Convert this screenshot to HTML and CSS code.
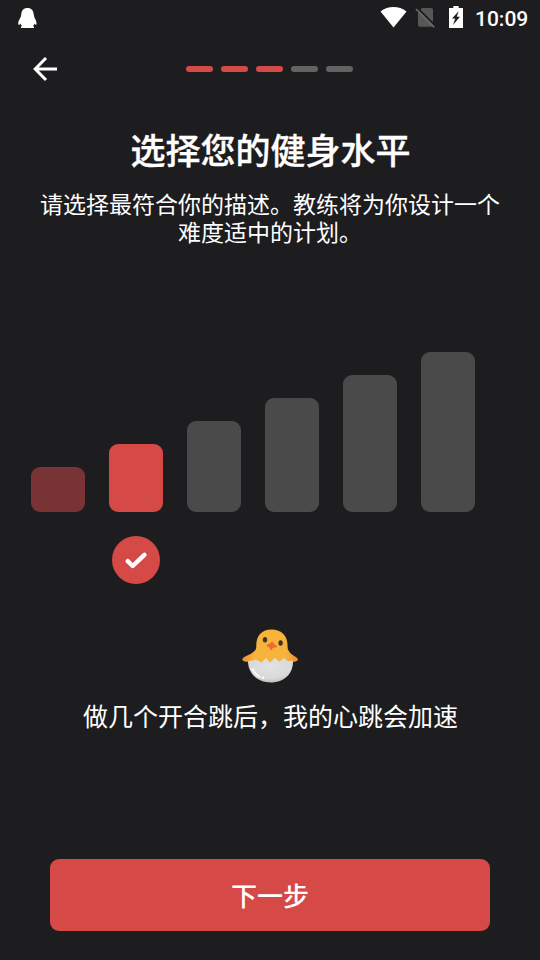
FILE: index.html
```html
<!DOCTYPE html>
<html lang="zh-CN">
<head>
<meta charset="utf-8">
<title>选择您的健身水平</title>
<link rel="stylesheet" href="styles.css">
</head>
<body>
<main class="screen">
  <header class="status">
    <svg class="penguin" width="20" height="22" viewBox="0 0 20 22"><path fill="#fff" d="M9.5 0C5.7 0 3.3 2.6 3.2 6.8C3.1 8.6 2.3 10 1.1 12C.1 14 0 16 .6 16.8C1.3 17.3 2.1 16 2.5 15.4C2.8 16.5 3.3 17.2 4 18C2.8 18.5 2.6 19.1 3.2 20L15.8 20C16.5 19.1 16 18.5 15 18C15.8 17.2 16.2 16.5 16.5 15.4C17 16 17.9 17.3 18.4 16.6C18.8 15.6 18.5 14 17.7 12C16.6 10 16 8.6 15.8 6.8C15.6 2.6 13.3 0 9.5 0Z"/></svg>
    <div class="indicators">
      <svg class="wifi" width="27" height="21" viewBox="0 0 27 21"><path fill="#fff" d="M13.5 20.5L.5 4.4C4.3 1.4 8.7 0 13.5 0S22.7 1.4 26.5 4.4Z"/></svg>
      <svg class="nosim" width="21" height="22" viewBox="0 0 21 22"><path fill="#575757" d="M7 1H16.2Q18 1 18 2.8V17.8Q18 19.8 16.2 19.8H4.8Q3 19.8 3 18V5.2Z"/><path stroke="#1d1d1f" stroke-width="2" d="M2 .8L20.5 18.8"/><path stroke="#696969" stroke-width="1.7" d="M1 2L19.3 20.3"/></svg>
      <svg class="battery" width="14" height="22" viewBox="0 0 14 22"><path fill="#fff" d="M4.3 0H9.7V2H14V22H0V2H4.3Z"/><path fill="#1d1d1f" d="M9.6 5.2L3 12.4H6.2L4 19L11 10.8H7.8Z"/></svg>
      <span class="clock">10:09</span>
    </div>
  </header>

  <nav class="nav">
    <svg class="back" width="26" height="26" viewBox="0 0 26 26" fill="none" stroke="#fff" stroke-width="3"><path d="M13 2L2.2 13L13 24M2.5 13H24"/></svg>
    <div class="steps"><i class="step done"></i><i class="step done"></i><i class="step done"></i><i class="step"></i><i class="step"></i></div>
  </nav>

  <h1 class="title">选择您的健身水平</h1>
  <p class="intro">请选择最符合你的描述。教练将为你设计一个<br>难度适中的计划。</p>

  <section class="levels">
    <div class="level"><div class="bar passed h1"></div></div>
    <div class="level"><div class="bar active h2"></div></div>
    <div class="level"><div class="bar h3"></div></div>
    <div class="level"><div class="bar h4"></div></div>
    <div class="level"><div class="bar h5"></div></div>
    <div class="level"><div class="bar h6"></div></div>
  </section>
  <div class="check"><svg width="48" height="48" viewBox="0 0 48 48"><path d="M15.7 25.2L20.7 30L32.4 18.8" fill="none" stroke="#fff" stroke-width="4.4" stroke-linecap="round" stroke-linejoin="round"/></svg></div>

  <svg class="chick" width="80" height="70" viewBox="0 0 80 70">
    <defs>
      <linearGradient id="wing" x1="0" y1="0" x2="1" y2="0"><stop offset="0" stop-color="#ee8f2c"/><stop offset=".22" stop-color="#f7b43c"/><stop offset=".78" stop-color="#f7b43c"/><stop offset="1" stop-color="#ee8f2c"/></linearGradient>
      <radialGradient id="shell" cx=".5" cy=".35" r=".65"><stop offset="0" stop-color="#e2e2e2"/><stop offset=".75" stop-color="#d9d9da"/><stop offset="1" stop-color="#bebec0"/></radialGradient>
    </defs>
    <path fill="url(#wing)" d="M26.3 27C25.7 16 31.5 9.4 41.5 9.4C52 9.4 58 16 57.6 27C57.6 31 61 34 64.5 36.2C67.2 37.7 68.6 39 67.5 40.3C66.2 42 62.5 42 59 41.5L54 46H28L23 41.2C18.5 42 14.2 42 12.7 40.2C11.5 38.8 13.3 37.5 15.6 36.3C20.7 33.7 26.2 31.5 26.3 27Z"/>
    <path fill="url(#shell)" d="M18 41L22 40.7L26 39.5L31.5 42.4L35.8 38L40 42.4L45 37.7L49.3 41.8L54 38L58 41.3L63 40.6C63.4 54 54 62.4 40.8 62.4C27.5 62.4 18 53.5 18 41Z"/>
    <path d="M22.5 49Q25 54.5 29.5 56.7" fill="none" stroke="#f6f6f6" stroke-width="2.2" stroke-linecap="round"/>
    <circle cx="33" cy="57.7" r="1.2" fill="#fff"/>
    <ellipse cx="35" cy="19.8" rx="2.2" ry="2.7" fill="#42351f"/><ellipse cx="50.6" cy="23" rx="2.2" ry="2.7" fill="#42351f"/>
    <path fill="#ec6c2f" stroke="#ec6c2f" stroke-width="1.8" stroke-linejoin="round" d="M42 22.5L43.6 24.6L46 26.5L42.8 26.8L41 29.3L39.8 26.8L37.5 25.4L40.8 24.3Z"/>
  </svg>
  <p class="caption">做几个开合跳后，我的心跳会加速</p>
  <button class="next">下一步</button>
</main>
</body>
</html>
```

FILE: styles.css
```css
* { box-sizing: border-box; }
body {
  margin: 0;
  background: #1d1d1f;
  color: #fff;
  font-family: Roboto, "Noto Sans CJK SC", sans-serif;
}
.screen {
  width: 540px;
  height: 960px;
  display: flex;
  flex-direction: column;
  align-items: center;
  overflow: hidden;
}
.status {
  width: 100%;
  height: 36px;
  display: flex;
  justify-content: space-between;
  padding: 0 12px 0 18px;
}
.penguin { margin-top: 8px; }
.indicators { display: flex; }
.wifi { margin: 7px 8px 0 0; }
.nosim { margin: 7px 13px 0 0; }
.battery { margin: 6px 12px 0 0; }
.clock {
  font-size: 21px;
  font-weight: 500;
  line-height: 38px;
  width: 53px;
  white-space: nowrap;
}
.nav {
  width: 100%;
  height: 66px;
  display: grid;
  grid-template-columns: 1fr auto 1fr;
  align-items: center;
}
.back { margin-left: 33px; }
.steps { display: flex; gap: 8px; margin-right: 1px; }
.step { width: 27px; height: 6px; border-radius: 3px; background: #636363; }
.step.done { background: #d54947; }
.title {
  margin: 24px 0 0 1px;
  font-size: 35px;
  line-height: 54px;
  font-weight: 500;
  -webkit-text-stroke: 0.35px #fff;
}
.intro {
  margin: 12px 0 0;
  font-size: 23px;
  line-height: 28px;
  text-align: center;
  white-space: nowrap;
}
.levels {
  width: 100%;
  height: 160px;
  margin-top: 104px;
  padding-left: 31px;
  display: flex;
  align-items: flex-end;
  gap: 24px;
}
.bar { width: 54px; border-radius: 9px; background: #4a4a4b; }
.bar.passed { background: #793334; }
.bar.active { background: #d54947; }
.h1 { height: 45px; }
.h2 { height: 68px; }
.h3 { height: 91px; }
.h4 { height: 114px; }
.h5 { height: 137px; }
.h6 { height: 160px; }
.check {
  align-self: flex-start;
  width: 48px;
  height: 48px;
  margin: 24px 0 0 112px;
  border-radius: 50%;
  background: #d54947;
}
.check svg { display: block; }
.chick { margin-top: 36px; flex: none; }
.caption {
  margin: 10px 0 0 1px;
  font-size: 25px;
  line-height: 36px;
  white-space: nowrap;
}
.next {
  width: 440px;
  height: 72px;
  margin-top: 123px;
  padding: 4px 0 0;
  border: 0;
  border-radius: 9px;
  background: #d54947;
  color: #fff;
  font: 500 26px/68px Roboto, "Noto Sans CJK SC", sans-serif;
}
```
